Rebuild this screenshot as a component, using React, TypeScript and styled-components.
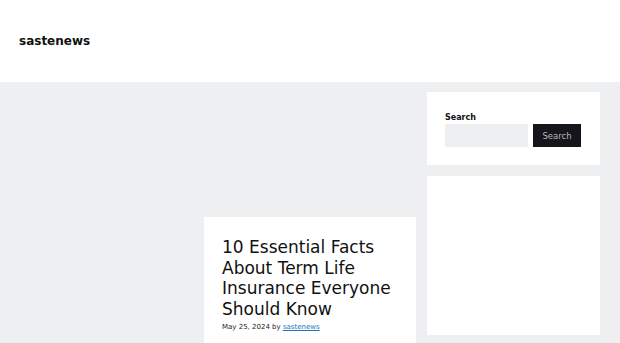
import React from 'react';
import styled, { createGlobalStyle } from 'styled-components';

const GlobalStyle = createGlobalStyle`
  html, body {
    margin: 0;
    padding: 0;
    background: #eeeff1;
  }
  body {
    font-family: 'DejaVu Sans', sans-serif;
    color: #222222;
  }
`;

const Header = styled.header`
  background: #ffffff;
  height: 82px;
  display: flex;
  align-items: center;
  padding: 0 19px;
  box-sizing: border-box;
`;

const SiteTitle = styled.a`
  font-size: 12px;
  font-weight: 700;
  color: #111111;
  text-decoration: none;
`;

const Body = styled.div`
  display: grid;
  grid-template-columns: 193px 212px 173px;
  column-gap: 11px;
  padding-top: 10px;
  align-items: start;
`;

const Column = styled.div<{ $offset?: number }>`
  display: flex;
  flex-direction: column;
  gap: 11px;
  margin-top: ${p => p.$offset ?? 0}px;
`;

const Card = styled.div<{ $height?: number }>`
  background: #ffffff;
  box-sizing: border-box;
  min-height: ${p => p.$height ?? 0}px;
`;

const Article = styled(Card)`
  padding: 20px 18px 20px;
`;

const Title = styled.h2`
  margin: 0;
  font-size: 17px;
  font-weight: 400;
  line-height: 20.5px;
  color: #111111;
`;

const Meta = styled.div`
  margin-top: 4px;
  font-size: 7px;
  color: #222222;

  a {
    color: #1e73be;
    text-decoration: underline;
  }
`;

const Widget = styled(Card)`
  padding: 21px 18px 18px;
  height: 73px;
`;

const WidgetTitle = styled.label`
  display: block;
  font-size: 8px;
  font-weight: 700;
  color: #111111;
  margin-bottom: 2px;
`;

const SearchRow = styled.div`
  display: flex;
  gap: 5px;
`;

const SearchInput = styled.input`
  width: 83px;
  height: 23px;
  box-sizing: border-box;
  border: 1px solid #eeeff1;
  background: #eeeff1;
  padding: 0 6px;
  outline: none;
`;

const SearchButton = styled.button`
  width: 48px;
  height: 23px;
  border: none;
  background: #16151b;
  color: #b5b5b8;
  font-family: 'DejaVu Sans', sans-serif;
  font-size: 8.5px;
  padding: 0;
  cursor: pointer;
`;

export default function App() {
  return (
    <>
      <GlobalStyle />
      <Header>
        <SiteTitle href="#">sastenews</SiteTitle>
      </Header>
      <Body>
        <Column />
        <Column $offset={125}>
          <Article>
            <Title>10 Essential Facts About Term Life Insurance Everyone Should Know</Title>
            <Meta>
              May 25, 2024 by <a href="#">sastenews</a>
            </Meta>
          </Article>
        </Column>
        <Column>
          <Widget>
            <WidgetTitle>Search</WidgetTitle>
            <SearchRow>
              <SearchInput type="search" />
              <SearchButton>Search</SearchButton>
            </SearchRow>
          </Widget>
          <Card $height={159} />
        </Column>
      </Body>
    </>
  );
}
